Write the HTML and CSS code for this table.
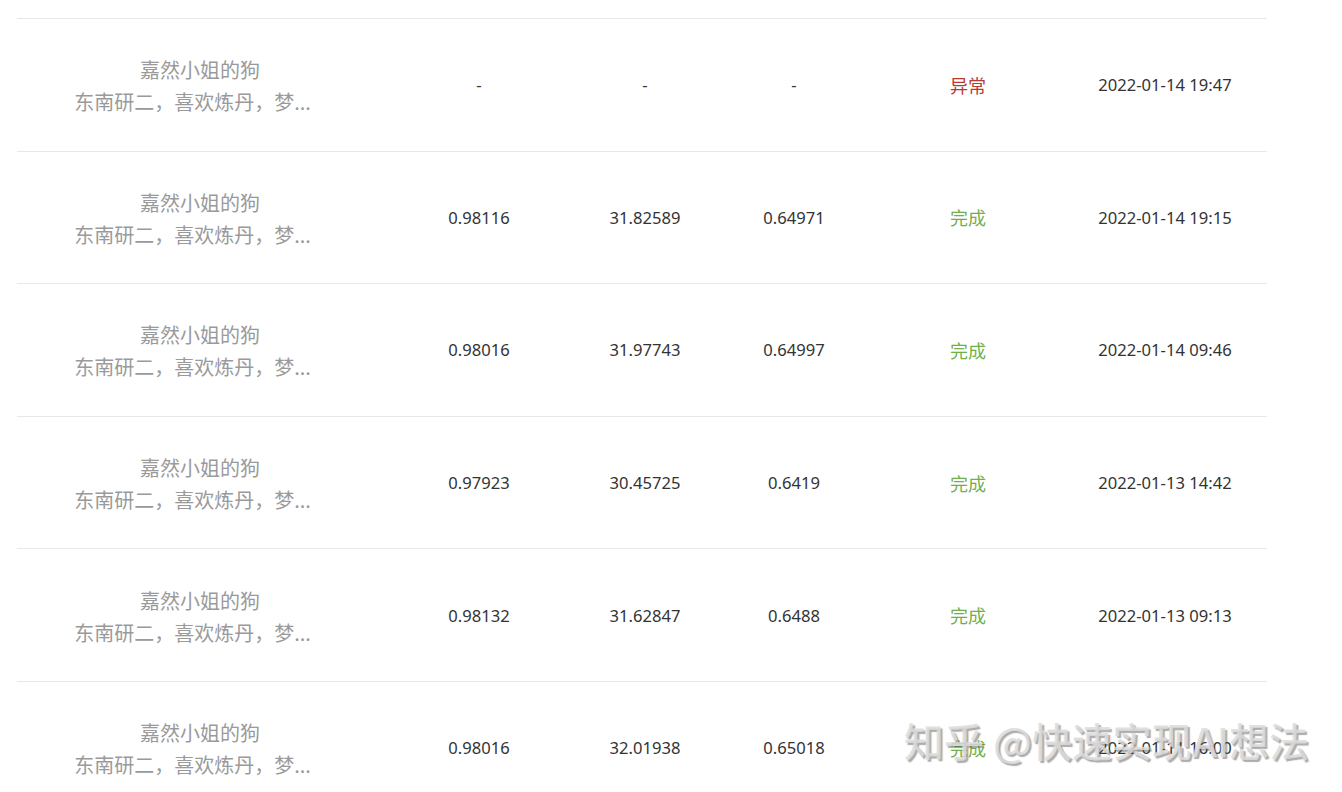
FILE: index.html
```html
<!DOCTYPE html>
<html lang="zh-CN">
<head>
<meta charset="utf-8">
<title>排行榜</title>
<link rel="stylesheet" href="styles.css">
</head>
<body>
<div class="page">
  <div class="table">
    <div class="row">
      <div class="cell user"><span class="name">嘉然小姐的狗</span><span class="desc">东南研二，喜欢炼丹，梦...</span></div>
      <div class="cell num">-</div>
      <div class="cell num">-</div>
      <div class="cell num">-</div>
      <div class="cell status err">异常</div>
      <div class="cell num">2022-01-14 19:47</div>
    </div>
    <div class="row">
      <div class="cell user"><span class="name">嘉然小姐的狗</span><span class="desc">东南研二，喜欢炼丹，梦...</span></div>
      <div class="cell num">0.98116</div>
      <div class="cell num">31.82589</div>
      <div class="cell num">0.64971</div>
      <div class="cell status ok">完成</div>
      <div class="cell num">2022-01-14 19:15</div>
    </div>
    <div class="row">
      <div class="cell user"><span class="name">嘉然小姐的狗</span><span class="desc">东南研二，喜欢炼丹，梦...</span></div>
      <div class="cell num">0.98016</div>
      <div class="cell num">31.97743</div>
      <div class="cell num">0.64997</div>
      <div class="cell status ok">完成</div>
      <div class="cell num">2022-01-14 09:46</div>
    </div>
    <div class="row">
      <div class="cell user"><span class="name">嘉然小姐的狗</span><span class="desc">东南研二，喜欢炼丹，梦...</span></div>
      <div class="cell num">0.97923</div>
      <div class="cell num">30.45725</div>
      <div class="cell num">0.6419</div>
      <div class="cell status ok">完成</div>
      <div class="cell num">2022-01-13 14:42</div>
    </div>
    <div class="row">
      <div class="cell user"><span class="name">嘉然小姐的狗</span><span class="desc">东南研二，喜欢炼丹，梦...</span></div>
      <div class="cell num">0.98132</div>
      <div class="cell num">31.62847</div>
      <div class="cell num">0.6488</div>
      <div class="cell status ok">完成</div>
      <div class="cell num">2022-01-13 09:13</div>
    </div>
    <div class="row">
      <div class="cell user"><span class="name">嘉然小姐的狗</span><span class="desc">东南研二，喜欢炼丹，梦...</span></div>
      <div class="cell num">0.98016</div>
      <div class="cell num">32.01938</div>
      <div class="cell num">0.65018</div>
      <div class="cell status ok">完成</div>
      <div class="cell num">2022-01-11 16:00</div>
    </div>
  </div>
  <div class="watermark">知乎 @快速实现AI想法</div>
</div>
</body>
</html>
```

FILE: styles.css
```css
html, body {
  margin: 0;
  padding: 0;
  background: #fff;
}
.page {
  position: relative;
  width: 1342px;
  height: 792px;
  overflow: hidden;
  font-family: "Noto Sans", "Noto Sans CJK SC", sans-serif;
}
.table {
  margin-left: 17px;
  width: 1250px;
  padding-top: 18px;
}
.row {
  display: grid;
  grid-template-columns: 366px 192px 140px 158px 190px 204px;
  height: 132.6px;
  box-sizing: border-box;
  border-top: 1px solid #e8e8e8;
  align-items: center;
}
.cell {
  text-align: center;
}
.user {
  display: flex;
  flex-direction: column;
  align-items: center;
  font-family: "Noto Sans CJK SC", sans-serif;
  font-size: 20px;
  line-height: 32px;
  color: #9a9a9a;
  padding-top: 3px;
}
.desc {
  margin-right: 15px;
}
.num {
  font-size: 16.6px;
  color: #333;
}
.status {
  font-family: "Noto Sans CJK SC", sans-serif;
  font-size: 18px;
}
.err { color: #b83a33; }
.ok { color: #6fb04d; }
.watermark {
  position: absolute;
  left: 904px;
  top: 711px;
  font-family: "Noto Sans CJK SC", sans-serif;
  font-size: 40px;
  font-weight: 500;
  color: rgba(220, 220, 220, 0.85);
  text-shadow: 2px 2px 1px rgba(90, 90, 90, 0.5);
  white-space: nowrap;
}
```
